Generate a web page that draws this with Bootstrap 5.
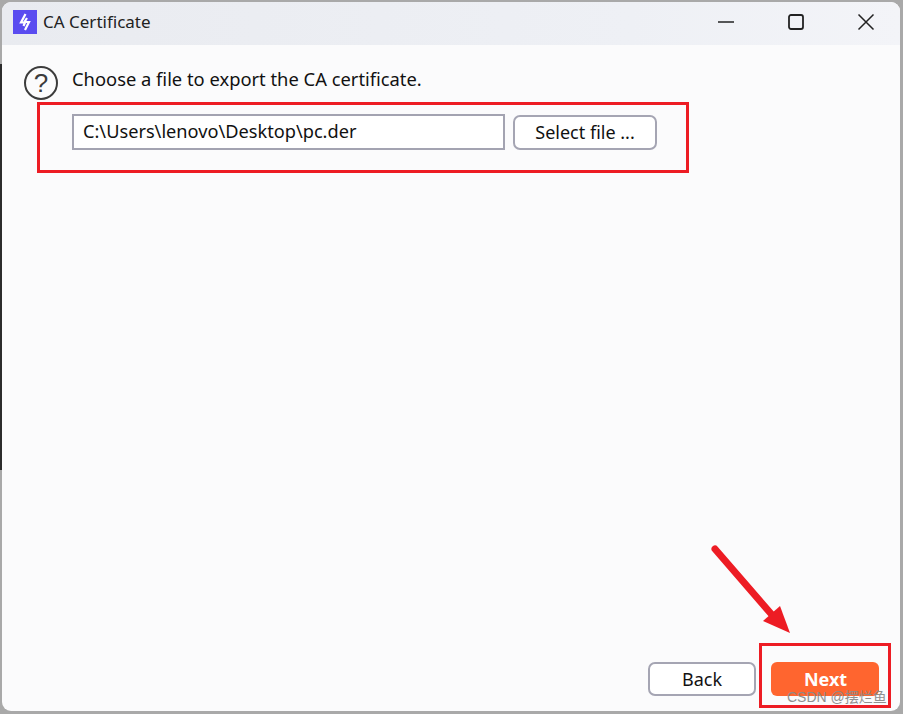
<!DOCTYPE html>
<html lang="en">
<head>
<meta charset="utf-8">
<title>CA Certificate</title>
<link href="https://cdn.jsdelivr.net/npm/bootstrap@5.3.0/dist/css/bootstrap.min.css" rel="stylesheet">
<style>
html,body{height:100%;margin:0}
body{background:#a9a9a9;font-family:"Noto Sans","Open Sans","Noto Sans CJK SC",sans-serif;color:#111;overflow:hidden;font-size:18px}
.stage{height:714px;width:903px;padding:2px 3px 3px 2px;position:relative}
.edge-dark{position:absolute;left:0;top:64px;width:2px;height:406px;background:#2c2c2c}
.win{height:100%;background:#fbfbfc;border-radius:9px;overflow:hidden}
.titlebar{height:43px;background:linear-gradient(90deg,#e9ebf0,#eef0f5 70%,#f3f4f8);padding:0 0 4px 11px}
.app-logo{width:24px;height:24px;background:#5a4cf0;flex:none}
.win-title{font-size:17px;margin:1px 0 0 6px;color:#222}
.win-ctrl{width:70px;height:39px}
.ctrl-group{margin-right:-1px}
.body-area{padding:19px 22px 0 21px}
.ask{width:36px;height:36px;flex:none;margin-top:1px}
.prompt{margin-left:13px;line-height:30px;font-size:18.35px}
.picker{margin:13px 0 0 49px;gap:8px}
.path-box{width:433px;height:36px;background:#fff;border:2px solid #a3a3b1;padding:0 9px;line-height:31px;font-size:18.2px}
.plain-btn{background:#fff;border:2px solid #a5a5b3;border-radius:7px;font-size:18px;color:#111;padding:0;height:35px;line-height:1}
.pick-btn{width:144px}
.foot{padding:0 21px 15px 0;gap:15px}
.back-btn{width:108px;height:34px;font-size:18px}
.next-btn{width:108px;height:34px;background:#ff652f;border:0;border-radius:6px;color:#fff;font-weight:700;font-size:18px;line-height:1;padding:0 0 0 1px}
.mark-box{position:absolute;border:3px solid #ed1c24;pointer-events:none}
.mark-a{left:37px;top:102px;width:652px;height:71px}
.mark-b{left:759px;top:643px;width:132px;height:65px}
.arrow{position:absolute;left:705px;top:540px;width:95px;height:100px}
.wm{position:absolute;left:787px;top:688px;font-size:14px;line-height:18px;color:#8b8b8b;white-space:nowrap;opacity:.95;font-family:"Liberation Sans","Noto Sans CJK SC",sans-serif}
</style>
</head>
<body>
<div class="stage">
  <div class="edge-dark"></div>
  <div class="win d-flex flex-column">
    <div class="titlebar d-flex align-items-center flex-shrink-0">
      <div class="app-logo d-flex align-items-center justify-content-center">
        <svg width="14" height="18" viewBox="0 0 14 18"><path d="M7.500 1 3 9.500h4L5.500 13M9 5 6.500 9H11L7 17" fill="none" stroke="#fff" stroke-width="2.200"/></svg>
      </div>
      <span class="win-title">CA Certificate</span>
      <div class="ms-auto d-flex ctrl-group">
        <div class="win-ctrl d-flex align-items-center justify-content-center">
          <svg width="16" height="16" viewBox="0 0 16 16"><path d="M0 8h16" stroke="#222" stroke-width="1.400"/></svg>
        </div>
        <div class="win-ctrl d-flex align-items-center justify-content-center">
          <svg width="16" height="16" viewBox="0 0 16 16"><rect x="1" y="1" width="14" height="14" rx="2" fill="none" stroke="#222" stroke-width="1.800"/></svg>
        </div>
        <div class="win-ctrl d-flex align-items-center justify-content-center">
          <svg width="18" height="18" viewBox="0 0 18 18"><path d="M1.500 1.500l15 15M16.500 1.500l-15 15" stroke="#222" stroke-width="1.500" fill="none"/></svg>
        </div>
      </div>
    </div>
    <div class="body-area flex-grow-1">
      <div class="d-flex align-items-start">
        <svg class="ask" viewBox="0 0 36 36"><circle cx="18" cy="18" r="16" fill="none" stroke="#3c3c3c" stroke-width="2"/><text x="18" y="27" text-anchor="middle" font-size="26" fill="#3c3c3c" font-family="Liberation Sans, sans-serif">?</text></svg>
        <div class="prompt">Choose a file to export the CA certificate.</div>
      </div>
      <div class="picker d-flex align-items-center">
        <div class="path-box">C:\Users\lenovo\Desktop\pc.der</div>
        <button type="button" class="btn plain-btn pick-btn">Select file ...</button>
      </div>
    </div>
    <div class="foot d-flex justify-content-end align-items-center flex-shrink-0">
      <button type="button" class="btn plain-btn back-btn">Back</button>
      <button type="button" class="btn next-btn">Next</button>
    </div>
  </div>
  <div class="mark-box mark-a"></div>
  <div class="mark-box mark-b"></div>
  <svg class="arrow" viewBox="0 0 95 100"><path d="M10 9 68 76" stroke="#ed1c24" stroke-width="7" stroke-linecap="round" fill="none"/><path d="M85 93 58 81 75 66Z" fill="#ed1c24"/></svg>
  <div class="wm">CSDN @摆烂鱼</div>
</div>
<script src="https://cdn.jsdelivr.net/npm/bootstrap@5.3.0/dist/js/bootstrap.bundle.min.js"></script>
</body>
</html>
